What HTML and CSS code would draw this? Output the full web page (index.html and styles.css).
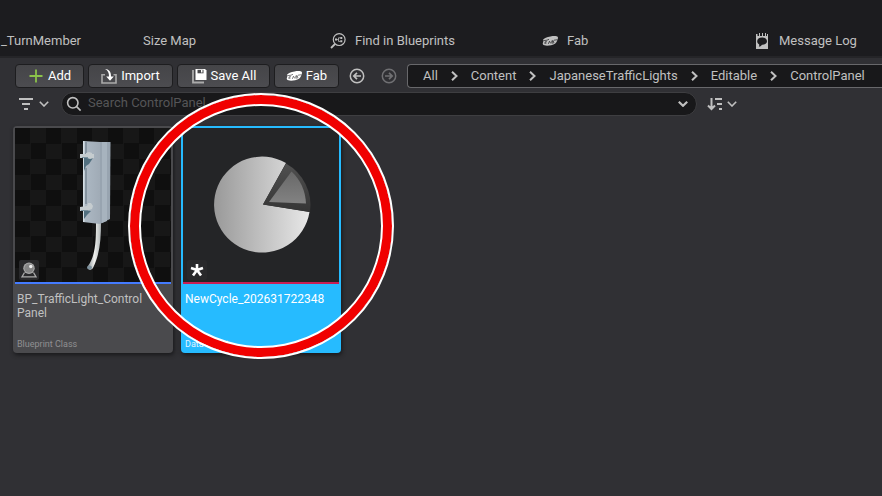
FILE: index.html
```html
<!DOCTYPE html>
<html lang="en">
<head>
<meta charset="utf-8">
<title>Content Browser</title>
<meta name="viewport" content="width=device-width, initial-scale=1">
<link rel="stylesheet" href="styles.css">
</head>
<body>
<svg class="defs" aria-hidden="true">
  <symbol id="fab" viewBox="0 0 16 16">
    <path fill="currentColor" d="M1 6.800C2 5 5 3.800 8.500 3.400c3-.4 6.600-.6 7.300.7.500 1.200-.2 2.200-.5 3.200-.7 2.600-2.600 4.400-6.200 5-3.500.6-7.400.6-8.200-1-.5-1.200.4-1.700.4-2.500C1.200 8.100.700 7.700 1 6.800z"/>
    <path fill="none" stroke="var(--cut)" stroke-width=".7" d="M.5 7.800l4.500-.6 2-.9M3 11V8.900l1.800-.4M3.200 10h1.400M6.300 10.900l1.200-2.700 1.300 2.300M9.800 7.700v2.600M10 7.800c2-.6 2.200.7.400 1 2.400-.3 2 1.200-.2 1.400M12 7.200l3.500-.5"/>
  </symbol>
  <symbol id="down" viewBox="0 0 10 6"><path fill="none" stroke="currentColor" stroke-width="1.600" d="M.8.8L5 5 9.200.8"/></symbol>
  <symbol id="down-bold" viewBox="0 0 10 6"><path fill="none" stroke="currentColor" stroke-width="2.200" d="M.8.8L5 4.800 9.200.8"/></symbol>
  <symbol id="next" viewBox="0 0 7 10"><path fill="none" stroke="currentColor" stroke-width="2" d="M1 0.800L5.500 5 1 9.200"/></symbol>
</svg>

<nav class="tabs">
  <a class="tab tab-cut" href="#">_TurnMember</a>
  <a class="tab" href="#"><span class="icon"></span>Size Map</a>
  <a class="tab" href="#"><svg class="icon" viewBox="0 0 16 16" fill="none" stroke="currentColor"><circle cx="9.200" cy="6.600" r="5.900" stroke-width="1.200"/><path stroke-width="1.800" d="M5 11L1 15"/><path stroke-width=".8" d="M6 6.600h2M10.500 4.800H8.500v3.600h2"/><path fill="currentColor" stroke="none" d="M5 5.600h2v2H5zM10.300 3.900h2v2h-2zM10.300 7.300h2v2h-2z"/></svg>Find in Blueprints</a>
  <a class="tab" href="#"><svg class="icon"><use href="#fab"/></svg>Fab</a>
  <a class="tab" href="#"><svg class="icon" viewBox="0 0 16 16"><path fill="currentColor" d="M2 1h1.500v2h1.500V0h1v3h2V0h1v3h2V0h1v3h1V1h1v15H2z"/><path fill="var(--cut)" d="M8 4.500c3.200 0 5 1.500 5 3.700s-2 3.600-5 3.600c-.7 1.200-2 1.900-3.200 2 .5-.8.5-1.500.3-2.500C3.800 10.600 3.200 9.500 3.200 8.200 3.200 6 5 4.500 8 4.500z"/></svg>Message Log</a>
</nav>

<main class="browser">
  <div class="toolbar">
    <div class="actions">
      <button class="btn btn-add"><svg class="icon" viewBox="0 0 16 16"><path stroke="#8bc24a" stroke-width="1.800" d="M8 1.500v13M1.500 8h13"/></svg>Add</button>
      <button class="btn btn-import"><svg class="icon" viewBox="0 0 16 16" fill="none"><path stroke="#aaa" stroke-width="1.600" d="M4 6.800H1V15h14V6.800h-2.500"/><path fill="#fff" d="M4 1c4 .2 6 2.600 6 7.500h2.800L9 12.800 5.200 8.500H8C8 5 7 2.500 4 1z"/></svg>Import</button>
      <button class="btn btn-save"><svg class="icon" viewBox="0 0 16 16"><path fill="none" stroke="#aaa" stroke-width="1.800" d="M2 2v12.500h11"/><path fill="#fff" d="M4.500 1H14l1.500 1.500V12h-11z"/><path fill="#48484b" d="M6.500 1.800h6v3.500h-6z"/><path fill="#fff" d="M10 2h1.500v2.500H10z"/></svg>Save All</button>
      <button class="btn btn-fab"><svg class="icon"><use href="#fab"/></svg>Fab</button>
    </div>
    <div class="history">
      <button class="round" aria-label="Back"><svg class="icon" viewBox="0 0 16 16" fill="none" stroke="currentColor"><circle cx="8" cy="8" r="6.700" stroke-width="1.500"/><path stroke-width="1.700" d="M12 8H5M8 4.800L4.800 8 8 11.200"/></svg></button>
      <button class="round" disabled aria-label="Forward"><svg class="icon" viewBox="0 0 16 16" fill="none" stroke="currentColor"><circle cx="8" cy="8" r="6.700" stroke-width="1.500"/><path stroke-width="1.700" d="M4 8h7M8 4.800L11.200 8 8 11.200"/></svg></button>
    </div>
    <nav class="path">
      <a href="#">All</a><svg class="next"><use href="#next"/></svg><a href="#">Content</a><svg class="next"><use href="#next"/></svg><a href="#">JapaneseTrafficLights</a><svg class="next"><use href="#next"/></svg><a href="#">Editable</a><svg class="next"><use href="#next"/></svg><a href="#">ControlPanel</a>
    </nav>
  </div>

  <div class="filters">
    <button class="plain" aria-label="Filters"><svg class="icon" viewBox="0 0 16 16"><path stroke="currentColor" stroke-width="1.800" d="M1 3h14M4 8h8M6 13h4"/></svg><svg class="down"><use href="#down"/></svg></button>
    <label class="search"><svg class="icon" viewBox="0 0 16 16" fill="none" stroke="currentColor" stroke-width="1.600"><circle cx="6.800" cy="6.800" r="5.200"/><path d="M10.600 10.600l4 4"/></svg><input type="text" aria-label="Search ControlPanel" placeholder="Search ControlPanel"><svg class="down"><use href="#down-bold"/></svg></label>
    <button class="plain plain-sort" aria-label="Sort"><svg class="icon" viewBox="0 0 16 16" fill="none" stroke="currentColor" stroke-width="2"><path d="M4.500 2v11M1 9.500l3.500 3.500L8 9.500M8 3h7M10 8h5M12 13h3"/></svg><svg class="down"><use href="#down"/></svg></button>
  </div>

  <section class="assets">
    <article class="asset">
      <div class="thumb checker">
        <svg class="art" viewBox="0 0 156 154">
          <defs>
            <linearGradient id="side" x2="1"><stop stop-color="#aebac5"/><stop offset="1" stop-color="#a0abb6"/></linearGradient>
            <linearGradient id="pipe" x2="1"><stop stop-color="#8d9498"/><stop offset=".5" stop-color="#f0f1ee"/><stop offset="1" stop-color="#b0b6b8"/></linearGradient>
          </defs>
          <path fill="url(#pipe)" d="M81 94h5c0 17-1 32-8 46-2 3-6 2-5-2 8-11 8-27 8-44z"/>
          <ellipse cx="74.500" cy="139.500" rx="2.500" ry="2" fill="#7e929e"/>
          <path fill="url(#side)" d="M68 13l17 1v82l-17-2z"/>
          <path fill="#98a4b0" d="M85 14h10.500l-.5 77-10 5z"/>
          <path fill="#a7b3be" d="M87 14h5v79l-5 2z"/>
          <path fill="#d4dee4" d="M68 13h1.500v81H68z"/>
          <path stroke="#60717c" d="M71 14v14M71 40v36" fill="none"/>
          <path fill="#527080" d="M69 29l9 1-4 6-3 2-2 5zM69 82l7 1-4 4-3 4z"/>
          <path fill="#c5cccf" d="M65 26h6v-1l3-1 3 1v1h2v4l-4 1-3-1h-7zM65 79l7-1 1-3h3l2 3-1 3-6 2h-6z"/>
          <path fill="#78909d" d="M67 29h6v1h-6zM66 82h7v1h-7z"/>
        </svg>
        <span class="badge"><svg class="icon" viewBox="0 0 16 16"><path fill="none" stroke="#aaa" stroke-width="1.300" d="M3.500 10.500L1 14.800h14l-2.500-4.300"/><circle cx="8" cy="6.200" r="5.700" fill="#aaa"/><circle cx="8" cy="6.200" r="4.600" fill="#858585"/><circle cx="9.800" cy="4.500" r="1.700" fill="#eee"/></svg></span>
      </div>
      <div class="info"><h2>BP_TrafficLight_Control<wbr>Panel</h2><p>Blueprint Class</p></div>
    </article>
    <article class="asset selected">
      <div class="thumb">
        <svg class="art" viewBox="0 0 156 154">
          <defs>
            <linearGradient id="pie" x2="1"><stop stop-color="#999"/><stop offset="1" stop-color="#e8e8e8"/></linearGradient>
            <linearGradient id="slice" y2="1" x2="0"><stop stop-color="#505050"/><stop offset="1" stop-color="#353535"/></linearGradient>
            <linearGradient id="core" y2="1" x2="0"><stop stop-color="#686868"/><stop offset="1" stop-color="#828282"/></linearGradient>
          </defs>
          <path fill="url(#pie)" d="M80 76.500L103 35A48 48 0 1 0 126.500 84z"/>
          <path fill="url(#slice)" d="M80 76.500L103 35.500A48 48 0 0 1 127 84z"/>
          <path fill="url(#core)" d="M86 74L108.500 43.500Q122 56 123 75.500z"/>
        </svg>
        <span class="badge"><svg class="icon" viewBox="0 0 16 16"><path stroke="#fff" stroke-width="2.600" d="M8 8V2M8 8l6-2M8 8l4 5.500M8 8l-4 5.500M8 8L2 6"/></svg></span>
      </div>
      <div class="info"><h2>NewCycle_202631722348</h2><p>Data Asset</p></div>
      <span class="ring"></span>
    </article>
  </section>
</main>
</body>
</html>
```
FILE: styles.css
```css
* { box-sizing: border-box; }

body {
  --cut: #1c1c1f;
  margin: 0;
  min-height: 100vh;
  display: flex;
  flex-direction: column;
  overflow-x: hidden;
  background: #303034;
  color: #c0c0c0;
  font: 13px/16px Roboto, sans-serif;
}

a { color: inherit; text-decoration: none; }
button, input { font: inherit; color: inherit; }
button { border: 0; padding: 0; background: none; }
svg { display: block; flex: none; }
.defs { position: absolute; width: 0; height: 0; }
.icon { width: 16px; height: 16px; flex: none; }
.down { width: 10px; height: 6px; }
.next { width: 7px; height: 10px; }

.tabs {
  display: grid;
  grid-template-columns: 118px repeat(4, 212px);
  height: 58px;
  padding-top: 26px;
  overflow: hidden;
  background: #1c1c1f;
  border-bottom: 2px solid #252528;
}
.tab { display: flex; align-items: center; gap: 9px; white-space: nowrap; }
.tab-cut { padding-left: 1px; }

.browser {
  flex: 1;
  padding: 6px 0 16px 13px;
}

.toolbar { display: flex; align-items: center; padding-left: 2px; }
.actions { display: flex; gap: 4px; }
.btn {
  --cut: #48484b;
  display: flex;
  align-items: center;
  justify-content: center;
  gap: 4px;
  height: 24px;
  border: 1px solid #1d1d1f;
  border-radius: 4px;
  background: linear-gradient(#454548, #4c4c50);
  color: #fff;
  white-space: nowrap;
}
.btn-add { width: 69px; }
.btn-import { width: 85px; }
.btn-save { width: 93px; }
.btn-fab { width: 65px; }

.history { display: flex; gap: 16px; margin: 0 10px; }
.round:disabled { color: #707073; }

.path {
  flex: 1;
  display: flex;
  align-items: center;
  gap: 13px;
  height: 24px;
  padding-left: 15px;
  overflow: hidden;
  white-space: nowrap;
  background: #18181a;
  border: 1px solid #68686b;
  border-right: 0;
  border-radius: 4px 0 0 4px;
}

.filters { display: flex; align-items: center; margin-top: 4px; padding-left: 5px; }
.plain { display: flex; align-items: center; gap: 5px; }
.plain-sort { gap: 4px; }
.search {
  flex: 1;
  display: flex;
  align-items: center;
  gap: 6px;
  height: 24px;
  max-width: 636px;
  margin: 0 10px 0 12px;
  padding: 0 8px 0 4px;
  border: 1px solid #3e3e41;
  border-radius: 12px;
  background: #18181a;
}
.search input {
  flex: 1;
  min-width: 0;
  padding: 0 0 2px;
  border: 0;
  outline: 0;
  background: none;
}
.search input::placeholder { color: #555557; opacity: 1; }

.assets { display: flex; flex-wrap: wrap; gap: 8px; margin-top: 10px; }
.asset {
  position: relative;
  width: 160px;
  padding: 2px;
  border-radius: 4px;
  background: #4a4a4d;
  box-shadow: 1px 2px 4px #18181a;
}
.thumb {
  position: relative;
  border-bottom: 2px solid #447bff;
  background: #242527;
}
.checker {
  background: repeating-conic-gradient(#171717 0 25%, #0f0f0f 0 50%) 0 0 / 31px 31px;
}
.art { width: 100%; height: auto; }
.badge {
  position: absolute;
  left: 4px;
  bottom: 2px;
  padding: 2px;
  border-radius: 2px;
  background: #29292b;
}
.info {
  display: flex;
  flex-direction: column;
  justify-content: space-between;
  height: 67px;
  padding: 8px 0 2px 2px;
}
h2 { margin: 0; font-size: 12px; font-weight: 400; line-height: 14px; }
p { margin: 0; font-size: 9px; line-height: 10px; color: #909092; }

.selected { background: #26bbff; color: #fff; }
.selected .thumb { border-color: #c81e55; }
.selected p { color: #e2f5ff; }

.ring {
  position: absolute;
  left: -53px;
  top: -33px;
  width: 266px;
  height: 266px;
  border: 2px solid #fff;
  border-radius: 50%;
  box-shadow: inset 0 0 0 9px #f00000, inset 0 0 0 11px #fff;
  pointer-events: none;
}
```
